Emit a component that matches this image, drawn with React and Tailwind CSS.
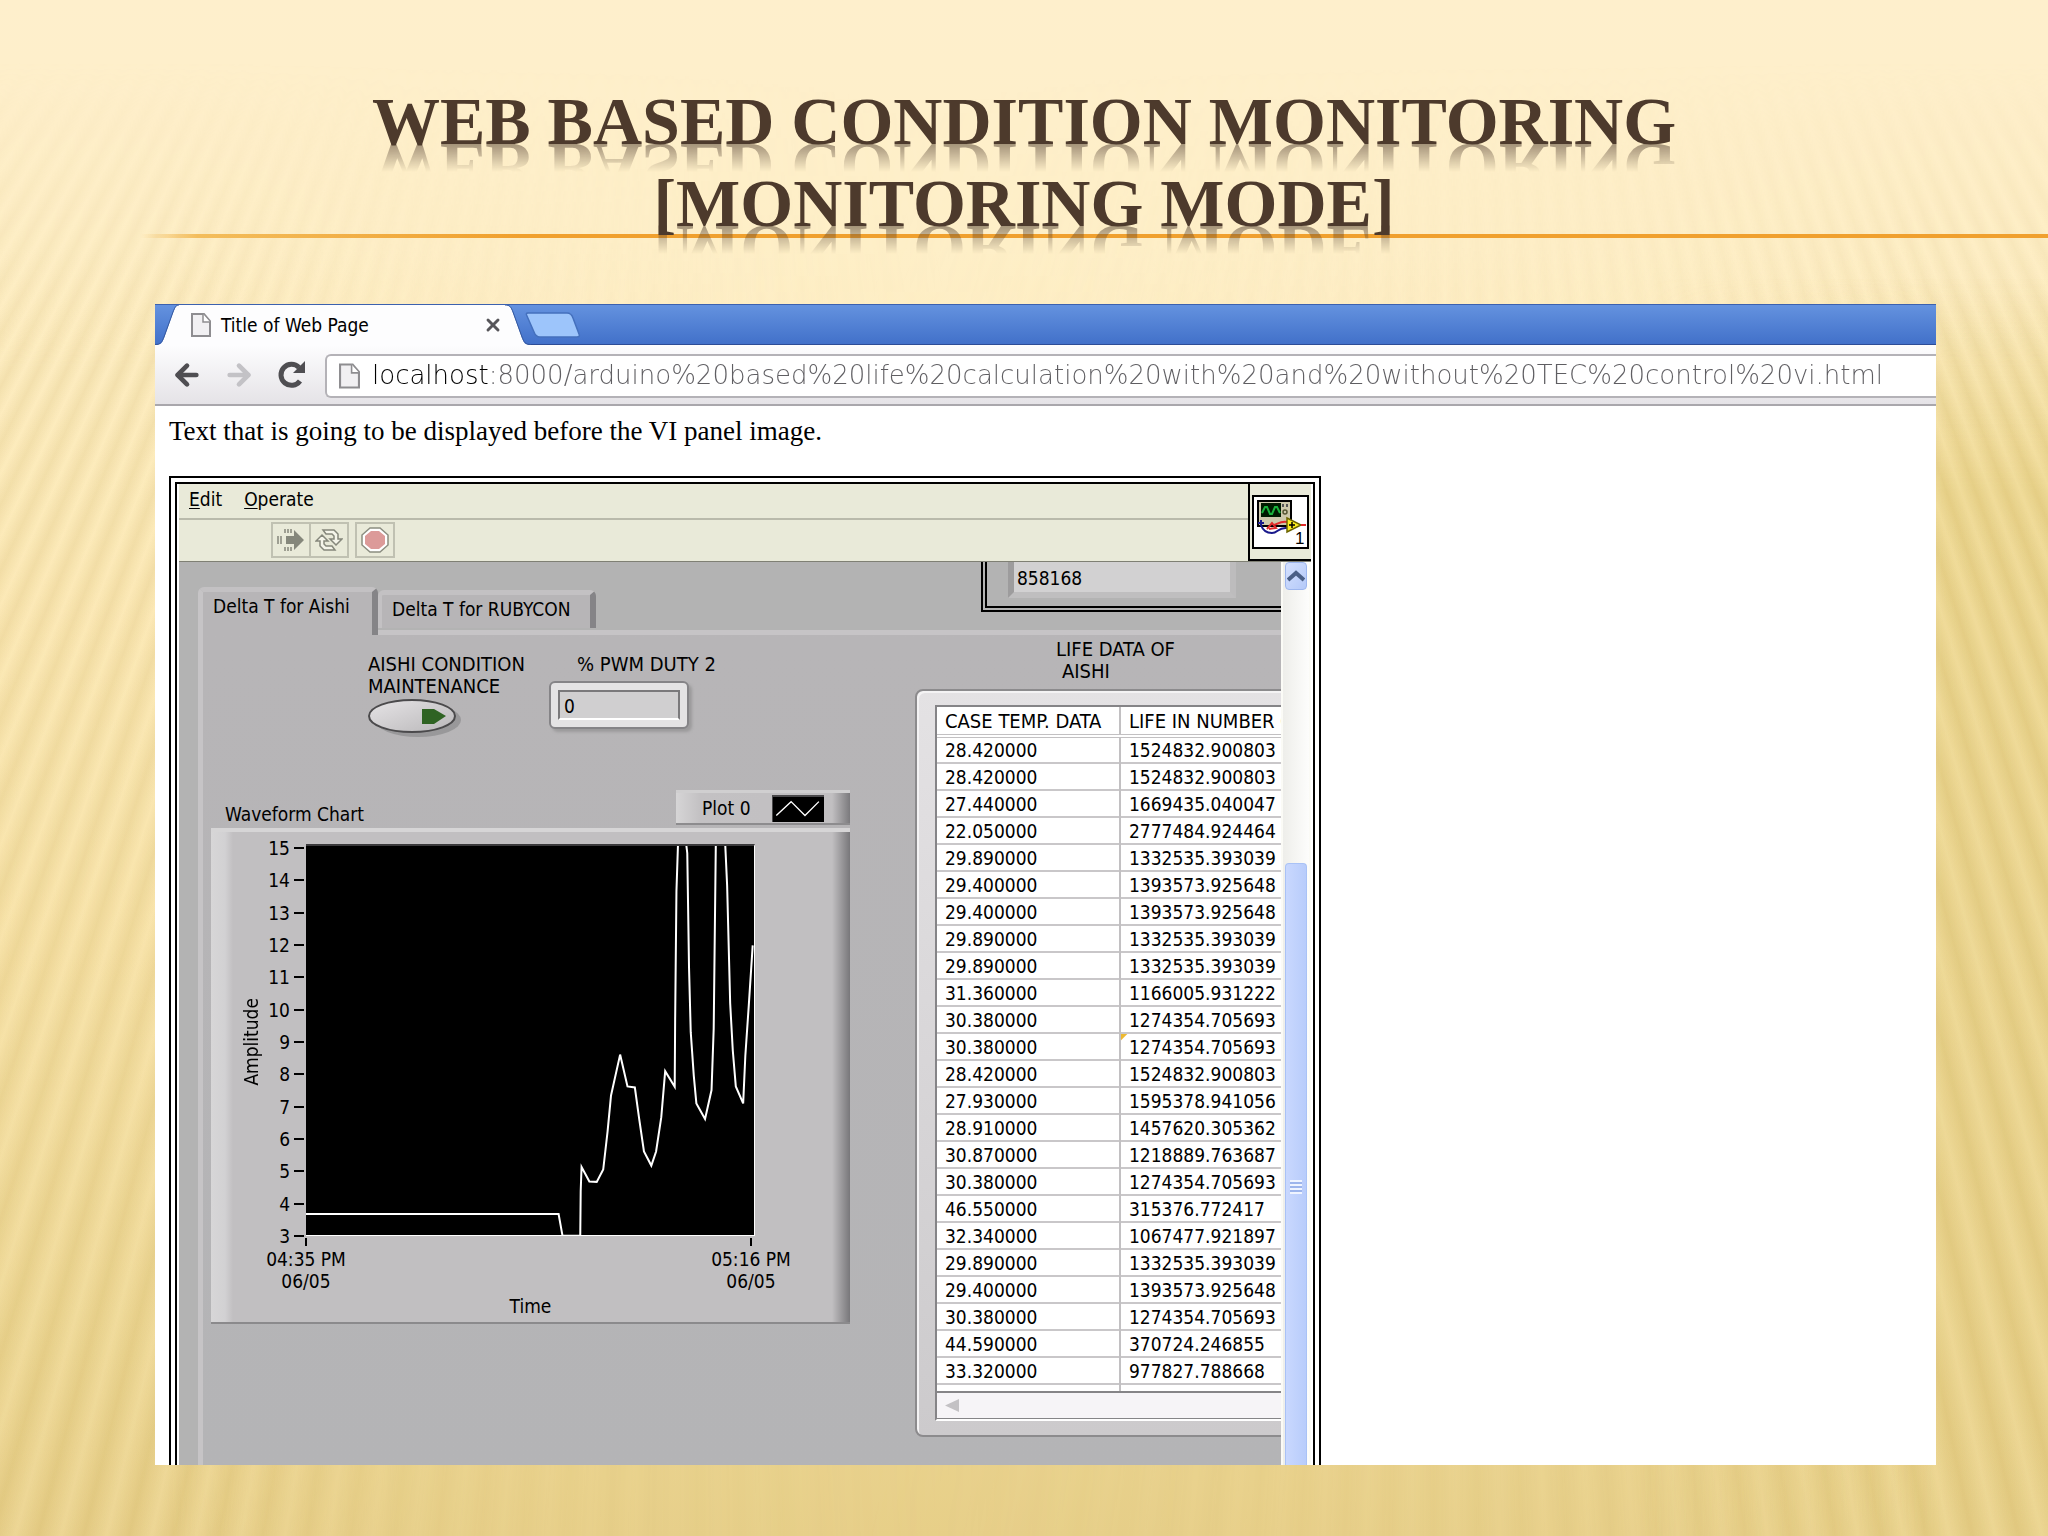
import React, { useState } from 'react';
import { ArrowLeft, ArrowRight, X } from 'lucide-react';

const lifeData = [
  ['28.420000', '1524832.900803'],
  ['28.420000', '1524832.900803'],
  ['27.440000', '1669435.040047'],
  ['22.050000', '2777484.924464'],
  ['29.890000', '1332535.393039'],
  ['29.400000', '1393573.925648'],
  ['29.400000', '1393573.925648'],
  ['29.890000', '1332535.393039'],
  ['29.890000', '1332535.393039'],
  ['31.360000', '1166005.931222'],
  ['30.380000', '1274354.705693'],
  ['30.380000', '1274354.705693'],
  ['28.420000', '1524832.900803'],
  ['27.930000', '1595378.941056'],
  ['28.910000', '1457620.305362'],
  ['30.870000', '1218889.763687'],
  ['30.380000', '1274354.705693'],
  ['46.550000', '315376.772417'],
  ['32.340000', '1067477.921897'],
  ['29.890000', '1332535.393039'],
  ['29.400000', '1393573.925648'],
  ['30.380000', '1274354.705693'],
  ['44.590000', '370724.246855'],
  ['33.320000', '977827.788668'],
];

const MARKED_ROW = 11;

const amplitudes = [15, 14, 13, 12, 11, 10, 9, 8, 7, 6, 5, 4, 3];

const wavePoints =
  '0,1018 583,1018 592,1078 633,1078 634,955 636,888 654,928 671,929 686,895 696,790 704,690 725,577 742,665 759,668 769,755 780,845 797,884 808,845 820,750 829,623 851,666 852,480 855,125 859,-20 876,-20 880,20 884,335 888,515 895,635 901,712 921,755 936,675 941,505 946,-20 967,-20 972,110 979,435 985,565 992,665 1009,712 1014,580 1022,440 1031,275';

const PageIcon = ({ className }) => (
  <svg viewBox="0 0 20 24" className={className} aria-hidden="true">
    <path d="M1 1H13L19 8V23H1Z" fill="#f1f0f2" stroke="#8e8d90" strokeWidth="2" />
    <path d="M12 1V9H19" fill="#fff" stroke="#8e8d90" strokeWidth="1.5" />
  </svg>
);

// Soft fanned stripes behind the slide
const Backdrop = () => (
  <div className="absolute inset-0 -z-10 overflow-hidden bg-[linear-gradient(to_bottom,#feefcc_0%,#feefc8_16%,#fceaba_34%,#f6e1a6_62%,#ebd591_88%,#e7cf89_100%)]">
    <div className="absolute inset-y-0 right-0 w-1/2 bg-[linear-gradient(to_bottom,transparent_18%,#ebd68f_32%,#e6cf87_100%)] [mask-image:linear-gradient(to_right,transparent_60%,black_90%)]" />
    <div className="absolute inset-0 [mask-image:linear-gradient(to_bottom,transparent_4%,black_24%)]">
      <div className="absolute inset-0 bg-[repeating-conic-gradient(from_0deg_at_34%_-60%,rgba(205,175,95,0.2)_0deg,rgba(255,236,185,0.25)_0.5deg,rgba(205,175,95,0.2)_1deg)] [mask-image:linear-gradient(to_right,black_0%,black_8%,rgba(0,0,0,0.3)_20%,transparent_48%)]" />
      <div className="absolute inset-0 bg-[repeating-conic-gradient(from_0deg_at_70%_-65%,rgba(205,175,95,0.2)_0deg,rgba(255,236,185,0.25)_0.5deg,rgba(205,175,95,0.2)_1deg)] [mask-image:linear-gradient(to_right,transparent_42%,rgba(0,0,0,0.4)_80%,black_95%)]" />
    </div>
  </div>
);

const TitleLine = ({ children }) => (
  <span className="mx-auto block w-fit [-webkit-box-reflect:below_-36px_linear-gradient(to_bottom,transparent_36px,rgba(0,0,0,0.5)_64px,transparent_65px)]">
    {children}
  </span>
);

const SlideTitle = () => (
  <header className="grid pt-20 pb-[60px]">
    <hr className="col-start-1 row-start-1 mb-1.5 ml-[140px] h-1 self-end border-0 bg-[linear-gradient(to_right,transparent_0%,#f3bd5c_3%,#f0a02e_20%)]" />
    <h1 className="col-start-1 row-start-1 text-center font-['Liberation_Serif',serif] text-[68px] leading-[82px] font-bold text-[#4d3a2c]">
      <TitleLine>WEB BASED CONDITION MONITORING</TitleLine>
      <TitleLine>[MONITORING MODE]</TitleLine>
    </h1>
  </header>
);

const TabStrip = () => (
  <div className="flex h-[41px] items-stretch border-t border-[#3c61ae] bg-linear-to-b from-[#6492df] to-[#4170c9] shadow-[inset_0_-1px_0_#2d4c96]">
    <svg viewBox="0 0 24 40" className="h-10 w-6 shrink-0" aria-hidden="true">
      <path d="M0 40C6 40 7 38 9 33L18 8C20 3 21 0 24 0V40Z" fill="#fdfdfe" />
      <path d="M0 39.500C6 39.500 7 37 9 32L18 7C20 2 21 0 24 0" fill="none" stroke="#35589f" />
    </svg>
    <div className="flex w-[326px] items-center bg-[#fdfdfe] pr-0.5 pl-3">
      <PageIcon className="h-6 w-5" />
      <span className="ml-2.5 flex-1 text-[19px]">Title of Web Page</span>
      <button aria-label="Close tab" className="text-[#57565a]">
        <X className="h-5 w-5" strokeWidth={3.5} />
      </button>
    </div>
    <svg viewBox="0 0 26 40" className="h-10 w-[26px] shrink-0" aria-hidden="true">
      <path d="M26 40C20 40 19 38 17 33L8 8C6 3 5 0 0 0V40Z" fill="#fdfdfe" />
      <path d="M26 39.500C20 39.500 19 37 17 32L8 7C6 2 5 0 0 0" fill="none" stroke="#35589f" />
    </svg>
    <button aria-label="New tab" className="-ml-1.5 self-center">
      <svg viewBox="0 0 56 26" className="h-[26px] w-14">
        <path d="M3 1H42C46 1 47 3 48 6L54 22C55 24 54 25 52 25H15C11 25 10 23 9 20L2 4C1 2 1 1 3 1Z" fill="#9dc5fb" stroke="#4470bd" strokeWidth="1.5" />
      </svg>
    </button>
  </div>
);

const AddressBar = () => {
  const [url, setUrl] = useState(
    'localhost:8000/arduino%20based%20life%20calculation%20with%20and%20without%20TEC%20control%20vi.html'
  );

  return (
    <div className="flex h-[61px] items-center border-b-2 border-[#a9a7ac] bg-linear-to-b from-[#fdfdfe] to-[#e5e3e7] pl-4 text-[#4f4e52]">
      <button aria-label="Back">
        <ArrowLeft className="h-8 w-8" strokeWidth={3.5} />
      </button>
      <button aria-label="Forward" className="ml-5 text-[#c3c2c6]">
        <ArrowRight className="h-8 w-8" strokeWidth={3.5} />
      </button>
      <button aria-label="Reload" className="ml-[22px]">
        <svg viewBox="0 0 30 28" className="h-7 w-[30px]" aria-hidden="true">
          <path d="M23 20A10.500 10.500 0 1 1 22 6.500" fill="none" stroke="currentColor" strokeWidth="5" />
          <path d="M28 0V12H16Z" fill="currentColor" />
        </svg>
      </button>
      <div className="mt-0.5 ml-[18px] flex h-11 flex-1 items-center overflow-hidden rounded-l-md border-2 border-r-0 border-[#b4b2b7] bg-white pl-3">
        <PageIcon className="h-[26px] w-[21px] shrink-0" />
        <input
          aria-label="Address"
          value={url}
          onChange={(e) => setUrl(e.target.value)}
          className="ml-3 w-full min-w-0 flex-1 bg-[linear-gradient(to_right,#000_116px,#5f5e62_116px)] bg-clip-text font-['DejaVu_Sans_Light','DejaVu_Sans',sans-serif] text-[26px] font-extralight text-transparent outline-none"
        />
      </div>
    </div>
  );
};

const ViIcon = () => (
  <svg viewBox="0 0 57 54" className="h-[54px] w-[57px]" aria-hidden="true">
    <rect x="1" y="1" width="55" height="52" fill="#fff" stroke="#000" strokeWidth="2" />
    <rect x="6" y="6" width="33" height="25" fill="#cdc8ac" stroke="#000" strokeWidth="2" />
    <rect x="9" y="8" width="20" height="14" fill="#001a00" />
    <path d="M10 18L13 12L15 12L18 19L20 19L23 12L25 12L28 18" fill="none" stroke="#19b23c" strokeWidth="2" />
    <path d="M31 9V12M35 9V12" stroke="#555" strokeWidth="2" />
    <circle cx="33" cy="17" r="2" fill="none" stroke="#553" strokeWidth="1.500" />
    <path d="M9 25V31M6 28H12" stroke="#1a1a8c" strokeWidth="2" />
    <path d="M9 30C11 36 15 38 20 38C26 38 26 32 35 33" fill="none" stroke="#1a1a8c" strokeWidth="2" />
    <path d="M15 34L20 28L24 33L17 34M22 30C26 29 28 26 35 27" fill="none" stroke="#e02a2a" strokeWidth="2" />
    <path d="M35 23L49 30L35 37Z" fill="#fdee21" stroke="#6b6400" strokeWidth="1.500" />
    <path d="M40 27V33M37 30H43" stroke="#000" strokeWidth="1.500" />
    <path d="M49 30H54" stroke="#e02a2a" strokeWidth="2" />
    <text x="43" y="49" fontSize="17" fontFamily="Liberation Sans, sans-serif">1</text>
  </svg>
);

const RunIcon = () => (
  <svg viewBox="0 0 28 24" className="h-6 w-7" aria-hidden="true">
    <path d="M9 8H17V2L27 12L17 22V16H9Z" fill="#85877b" />
    <path d="M1 8V16M4 8V16M8 1V5M11 1V5M14 1V5M8 19V23M11 19V23M14 19V23" stroke="#85877b" strokeWidth="1.500" />
  </svg>
);

const RunContinuouslyIcon = () => (
  <svg viewBox="0 0 28 24" className="h-6 w-7" fill="#f5f5ea" stroke="#85877b" strokeWidth="1.500" aria-hidden="true">
    <path d="M8 2H19L23 6V11H27L21 17L15 11H19V8L17 6H11Z" />
    <path d="M20 22H9L5 18V13H1L7 7L13 13H9V16L11 18H17Z" />
  </svg>
);

const AbortIcon = () => (
  <svg viewBox="0 0 28 26" className="h-[26px] w-7" aria-hidden="true">
    <path d="M9 1H19L27 8V18L19 25H9L1 18V8Z" fill="#fff" stroke="#8b8d80" strokeWidth="1.500" />
    <path d="M10 4H18L24 9V17L18 22H10L4 17V9Z" fill="#dc9a99" />
  </svg>
);

const toolButton = 'flex h-9 w-10 items-center justify-center border-2 border-[#c0c1b2]';

const MenuBar = () => (
  <div className="flex h-[78px] border-b border-[#7f8074] bg-[#e9ead9]">
    <div className="flex-1">
      <nav className="flex h-9 items-center gap-[22px] border-b-2 border-[#b9baab] pb-1 pl-2.5 text-[19px]">
        <button><u className="underline-offset-2">E</u>dit</button>
        <button><u className="underline-offset-2">O</u>perate</button>
      </nav>
      <div className="flex items-center pt-0.5 pl-[92px]">
        <button aria-label="Run" className={toolButton}><RunIcon /></button>
        <button aria-label="Run continuously" className={`${toolButton} -ml-0.5`}><RunContinuouslyIcon /></button>
        <button aria-label="Abort" className={`${toolButton} ml-1.5`}><AbortIcon /></button>
      </div>
    </div>
    <div className="flex w-[63px] items-center justify-center border-b-2 border-l-2 border-black">
      <ViIcon />
    </div>
  </div>
);

const PanelTabs = ({ active, onChange }) => (
  <div role="tablist" className="flex pt-[25px] pl-[19px] text-[19px]">
    <button
      role="tab"
      aria-selected={active === 'aishi'}
      onClick={() => onChange('aishi')}
      className="z-10 -mb-[5px] flex h-12 w-[180px] items-start rounded-t-md border-t-[5px] border-r-[6px] border-l-[5px] border-t-[#c3c1c3] border-r-[#858487] border-l-[#c6c4c6] bg-[#b7b5b7] pl-2.5 whitespace-nowrap"
    >
      Delta T for Aishi
    </button>
    <button
      role="tab"
      aria-selected={active === 'rubycon'}
      onClick={() => onChange('rubycon')}
      className="mt-[3px] mb-0.5 flex w-[218px] items-center rounded-t-md border-t-[5px] border-r-[6px] border-l-4 border-t-[#c3c1c3] border-r-[#858487] border-l-[#c3c1c3] bg-[#b7b5b7] pb-1 pl-2.5 whitespace-nowrap"
    >
      Delta T for RUBYCON
    </button>
  </div>
);

const CounterCluster = () => (
  <div className="ml-auto h-[50px] w-[300px] border-b-2 border-l-2 border-black bg-[#b3b3b3] pb-0.5 pl-0.5">
    <div className="h-full border-b-2 border-l-2 border-black pl-[21px]">
      <input
        aria-label="Counter"
        readOnly
        value="858168"
        className="h-9 w-[228px] border-r-[6px] border-b-[6px] border-l-[6px] border-r-[#bdbcbd] border-b-[#bfbebf] border-l-[#9d9c9d] bg-[#d2d1d2] px-[3px] pt-0.5 text-[19px] outline-none"
      />
    </div>
  </div>
);

const PowerControls = () => (
  <div className="flex pt-[18px] pl-[165px] text-[20px] leading-[22px]">
    <div className="w-[181px]">
      <label htmlFor="maintenance" className="block w-[170px]">AISHI CONDITION MAINTENANCE</label>
      <button id="maintenance" className="mt-px block">
        <svg viewBox="0 0 98 42" className="h-[42px] w-[98px]" aria-hidden="true">
          <defs>
            <linearGradient id="oval" x1="0" y1="0" x2="1" y2="1">
              <stop offset="0" stopColor="#e6e4e6" />
              <stop offset="1" stopColor="#b9b7b9" />
            </linearGradient>
          </defs>
          <ellipse cx="50" cy="22" rx="43" ry="17" fill="#8c8b8d" opacity="0.700" />
          <ellipse cx="44" cy="18" rx="43" ry="16" fill="url(#oval)" stroke="#4b4a4c" strokeWidth="2" />
          <path d="M54 11H66L78 18L66 26H54Z" fill="#2f6323" />
        </svg>
      </button>
    </div>
    <div className="flex flex-col">
      <label htmlFor="pwm" className="pl-7">% PWM DUTY 2</label>
      <div className="mt-1.5 h-12 w-[140px] rounded-md border-2 border-[#858487] bg-[#e4e3e4] p-[7px] shadow-[3px_3px_3px_#9b9a9b]">
        <input
          id="pwm"
          readOnly
          value="0"
          className="block h-full w-full border-2 border-[#7a797b] border-b-white bg-[#d0cfd0] px-1 pt-0.5 text-[19px] outline-none"
        />
      </div>
    </div>
  </div>
);

const TimeLabel = ({ time }) => (
  <div className="flex w-[100px] flex-col items-center leading-[22px]">
    <span className="mb-0.5 h-2 w-0.5 bg-black" />
    <span>{time}</span>
    <span>06/05</span>
  </div>
);

const WaveformChart = () => (
  <figure className="mt-[50px] ml-2 w-[639px] text-[19px]">
    <div className="flex items-end">
      <figcaption className="flex-1 pl-3.5">Waveform Chart</figcaption>
      <div className="mb-[3px] flex h-[35px] w-[174px] items-center border-t-[3px] border-b-2 border-t-[#d0cfd0] border-b-[#8d8c8e] bg-[linear-gradient(to_right,#d6d5d6,#c3c1c3_24px,#c1bfc1_156px,#7b7a7d)] pl-[26px]">
        <span className="w-[70px]">Plot 0</span>
        <svg viewBox="0 0 52 27" className="h-[27px] w-[52px] border-t-2 border-l border-[#4a494b] bg-black" aria-hidden="true">
          <path d="M2 20L18 5L33 20L48 5" fill="none" stroke="#fff" strokeWidth="1.500" />
        </svg>
      </div>
    </div>
    <div className="flex h-[496px] border-t-[4px] border-b-2 border-t-[#d6d5d6] border-b-[#8b8a8c] bg-[linear-gradient(to_right,#d7d6d7,#d2d1d3_14px,#c1bfc1_22px,#c1bfc1_621px,#78777a)]">
      <div className="flex h-[420px] w-[54px] items-center justify-end">
        <span className="rotate-180 [writing-mode:vertical-rl]">Amplitude</span>
      </div>
      <ul className="mt-1.5 flex h-[408px] w-[39px] flex-col justify-between">
        {amplitudes.map((value) => (
          <li key={value} className="flex items-center justify-end gap-1 leading-5">
            {value}
            <span className="h-0.5 w-2.5 bg-black" />
          </li>
        ))}
      </ul>
      <div className="ml-0.5">
        <svg
          viewBox="0 0 1034 1076"
          preserveAspectRatio="none"
          className="mt-3 h-[392px] w-[449px] border-t-2 border-r border-b border-t-[#3a393b] border-r-white border-b-white bg-black"
          role="img"
          aria-label="Amplitude over time"
        >
          <polyline points={wavePoints} fill="none" stroke="#fff" strokeWidth="2" vectorEffect="non-scaling-stroke" />
        </svg>
        <div className="-mr-[46px] -ml-[50px] mt-0.5 flex justify-between">
          <TimeLabel time="04:35 PM" />
          <TimeLabel time="05:16 PM" />
        </div>
        <div className="text-center leading-7">Time</div>
      </div>
    </div>
  </figure>
);

const LifeTable = () => (
  <div className="w-[460px] shrink-0">
    <h2 className="pt-[3px] pl-[141px] text-[20px] leading-[22px]">
      LIFE DATA OF
      <br />
      <span className="pl-1.5">AISHI</span>
    </h2>
    <div className="mt-[7px] rounded-l-lg border-2 border-[#8c8b8d] bg-linear-to-b from-[#e4e2e4] to-[#cccacc] pt-3.5 pb-3.5 pl-[18px] shadow-[inset_2px_2px_0_#f4f3f4]">
      <div className="border-t-2 border-b-2 border-l-2 border-t-[#858487] border-b-white border-l-[#858487] bg-white">
        <table className="w-full table-fixed border-collapse text-left text-[19px] leading-5">
          <thead>
            <tr className="h-[29px] border-b-4 border-double border-[#c2c0c2] text-[20px]">
              <th className="w-[183px] border-r-2 border-[#c2c0c2] pl-2 font-normal whitespace-nowrap">CASE TEMP. DATA</th>
              <th className="overflow-hidden pl-2 font-normal whitespace-nowrap">LIFE IN NUMBER OF</th>
            </tr>
          </thead>
          <tbody>
            {lifeData.map(([temp, life], index) => (
              <tr key={index} className="h-[27px] border-b-2 border-[#c9c7c9]">
                <td className="border-r-2 border-[#c2c0c2] pl-2">{temp}</td>
                <td className={index === MARKED_ROW ? 'bg-[linear-gradient(135deg,#edb92f_4px,transparent_5px)] pl-2' : 'pl-2'}>
                  {life}
                </td>
              </tr>
            ))}
            <tr className="h-[7px]">
              <td className="border-r-2 border-[#c2c0c2]" />
              <td />
            </tr>
          </tbody>
        </table>
        <div className="flex h-7 items-center border-t-2 border-b border-[#858487] bg-[#f6f4f7] pl-2">
          <button aria-label="Scroll left">
            <svg viewBox="0 0 14 13" className="h-[13px] w-3.5" aria-hidden="true">
              <path d="M0 6.500L14 0V13Z" fill="#c3c1c4" />
            </svg>
          </button>
        </div>
      </div>
    </div>
  </div>
);

const PanelScrollbar = () => (
  <div className="flex flex-1 flex-col border-x-2 border-[#fbfbf6] bg-linear-to-r from-[#eeeeea] to-[#fdfdfc] pr-0.5 pl-0.5">
    <button aria-label="Scroll up" className="flex h-7 items-center justify-center rounded border border-[#9db6ee] bg-linear-to-br from-[#d5e1fe] to-[#b4c9f8]">
      <svg viewBox="0 0 18 12" className="h-3 w-[18px]" aria-hidden="true">
        <path d="M1 10L9 3L17 10" fill="none" stroke="#4a5f86" strokeWidth="4" />
      </svg>
    </button>
    <div className="mt-[273px] flex flex-1 flex-col items-center rounded-t border border-b-0 border-[#a9c2f6] bg-linear-to-r from-[#c9d8fe] to-[#b8ccfb] pt-[316px]">
      <div className="h-3.5 w-3 bg-[repeating-linear-gradient(to_bottom,#eff4ff_0px,#eff4ff_2px,#9db5ec_2px,#9db5ec_4px)]" />
    </div>
  </div>
);

const FrontPanel = () => {
  const [tab, setTab] = useState('aishi');

  return (
    <div className="flex">
      <div className="w-[1102px] overflow-hidden bg-[#b3b3b3]">
        <div className="flex h-[68px] items-start">
          <PanelTabs active={tab} onChange={setTab} />
          <CounterCluster />
        </div>
        <div role="tabpanel" className="ml-[19px] flex border-t-[5px] border-l-[5px] border-[#c6c4c6] bg-linear-to-b from-[#b7b5b7] to-[#b4b4b6] pb-7">
          <div className="w-[712px] shrink-0">
            <PowerControls />
            <WaveformChart />
          </div>
          <LifeTable />
        </div>
      </div>
      <PanelScrollbar />
    </div>
  );
};

const App = () => (
  <div className="relative isolate min-h-screen pb-[71px] font-['DejaVu_Sans_Condensed','DejaVu_Sans',sans-serif] text-black">
    <Backdrop />
    <SlideTitle />
    <main className="mr-28 ml-[155px] overflow-hidden bg-white">
      <TabStrip />
      <AddressBar />
      <div className="pl-3.5">
        <p className="pt-2 font-['Liberation_Serif',serif] text-[27px] leading-[34px]">
          Text that is going to be displayed before the VI panel image.
        </p>
        <div className="mt-7 w-[1152px] border-x-2 border-t-2 border-black px-1 pt-1">
          <div className="border-x-2 border-t-2 border-black px-0.5">
            <MenuBar />
            <FrontPanel />
          </div>
        </div>
      </div>
    </main>
  </div>
);

export default App;
